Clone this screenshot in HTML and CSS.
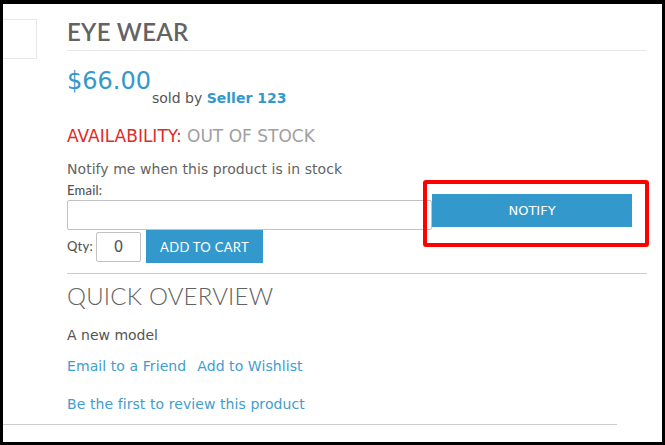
FILE: index.html
```html
<!DOCTYPE html>
<html>
<head>
<meta charset="utf-8">
<link rel="stylesheet" href="styles.css">
</head>
<body>
<div class="frame">
  <div class="row">
    <div class="thumb-col"><div class="thumb"></div></div>
    <div class="info">
      <h1 class="title">EYE WEAR</h1>
      <div class="price-row">
        <span class="price">$66.00</span>
        <span class="sold">sold by <a class="seller">Seller 123</a></span>
      </div>
      <p class="availability"><span class="avail-label">AVAILABILITY:</span> <span class="avail-value">OUT OF STOCK</span></p>
      <p class="notify-text">Notify me when this product is in stock</p>
      <div class="notify-form">
        <div class="email-col">
          <label class="field-label">Email:</label>
          <div class="email-input"></div>
        </div>
        <button class="btn notify-btn">NOTIFY</button>
        <div class="highlight"></div>
      </div>
      <div class="qty-row">
        <label class="field-label">Qty:</label>
        <div class="qty-input">0</div>
        <button class="btn cart-btn">ADD TO CART</button>
      </div>
      <div class="sep"></div>
      <h2 class="overview">QUICK OVERVIEW</h2>
      <p class="desc">A new model</p>
      <div class="links"><a class="link">Email to a Friend</a><a class="link">Add to Wishlist</a></div>
      <a class="link review">Be the first to review this product</a>
    </div>
  </div>
  <div class="bottom-rule"></div>
</div>
</body>
</html>
```
FILE: styles.css
```css
html, body { margin: 0; padding: 0; }
body { background: #000; width: 665px; height: 445px; overflow: hidden; }
.frame {
  margin: 4px 3px 0 3px;
  width: 659px;
  height: 438px;
  background: #fff;
  overflow: hidden;
}
.row { display: flex; align-items: flex-start; }
.thumb-col { width: 64px; flex: none; padding-top: 15px; }
.thumb {
  box-sizing: border-box;
  width: 34px; height: 40px;
  border: 1px solid #e8e8e8; border-left: 0;
}
.info { width: 580px; flex: none; padding-top: 13px; }
.title {
  margin: 0;
  font-family: Lato, "Open Sans", sans-serif;
  font-weight: 600;
  font-size: 24px;
  line-height: 30px;
  color: #636363;
  letter-spacing: 0.3px;
  padding-bottom: 3px;
  border-bottom: 1px solid #e8e8e8;
}
.price-row { display: flex; align-items: flex-start; margin-top: 16px; }
.price {
  font-family: "DejaVu Sans", sans-serif;
  font-size: 24px; line-height: 28px; color: #3399cc;
  width: 85px;
  white-space: nowrap;
}
.sold {
  margin-top: 22px;
  font-family: "DejaVu Sans", sans-serif;
  font-size: 14px; line-height: 18px; color: #555;
}
.seller { font-weight: bold; color: #3399cc; }
.availability {
  margin: 19px 0 0;
  font-family: "DejaVu Sans", sans-serif;
  font-size: 17px; line-height: 20px;
}
.avail-label { color: #e02b27; }
.avail-value { color: #a0a0a0; }
.notify-text {
  margin: 14px 0 0;
  font-family: "DejaVu Sans", sans-serif;
  font-size: 14px; line-height: 18px; color: #636363;
  letter-spacing: 0.05px;
}
.notify-form { position: relative; display: flex; align-items: flex-start; }
.field-label {
  display: block;
  font-family: Lato, "Open Sans", sans-serif;
  font-size: 13px; line-height: 15px; color: #555;
  font-weight: 500;
  letter-spacing: 0.2px;
}
.email-col { width: 365px; padding-top: 5px; }
.email-input {
  box-sizing: border-box;
  margin-top: 2px;
  height: 30px;
  border: 1px solid #c2c2c2;
  border-radius: 2px;
}
.btn {
  border: 0; margin: 0; padding: 0;
  background: #3399cc; color: #fff;
  font-size: 13px;
  cursor: pointer;
}
.notify-btn {
  width: 200px; height: 33px; margin-top: 16px;
  font-family: "DejaVu Sans", sans-serif;
}
.highlight {
  position: absolute;
  left: 356px; top: 2px;
  width: 226px; height: 67px;
  box-sizing: border-box;
  border: 4px solid #ff0000;
  border-radius: 3px;
}
.qty-row { display: flex; align-items: center; gap: 5px; margin-top: 0; }
.qty-row .field-label { width: 24px; }
.qty-input {
  box-sizing: border-box;
  width: 45px; height: 30px;
  border: 1px solid #c2c2c2; border-radius: 2px;
  display: flex; align-items: center; justify-content: center;
  font-family: "DejaVu Sans", sans-serif; font-size: 15px; color: #555;
}
.cart-btn {
  width: 117px; height: 33px;
  font-family: Lato, "Open Sans", sans-serif;
  font-size: 13px; letter-spacing: 0.3px;
}
.sep { margin-top: 10px; border-top: 1px solid #ccc; }
.overview {
  margin: 7px 0 0;
  font-family: Lato, "Open Sans", sans-serif;
  font-weight: 300;
  font-size: 24px; line-height: 30px; color: #636363;
  letter-spacing: 0.2px;
}
.desc {
  margin: 15px 0 0;
  font-family: "DejaVu Sans", sans-serif;
  font-size: 14px; line-height: 18px; color: #555;
}
.links { display: flex; gap: 11px; margin-top: 13px; }
.link {
  font-family: "DejaVu Sans", sans-serif;
  font-size: 14px; line-height: 18px; color: #3f9dd0;
  letter-spacing: 0.08px;
}
.review { display: block; margin-top: 20px; }
.bottom-rule { width: 614px; margin-top: 11px; border-top: 1px solid #ccc; }
```
